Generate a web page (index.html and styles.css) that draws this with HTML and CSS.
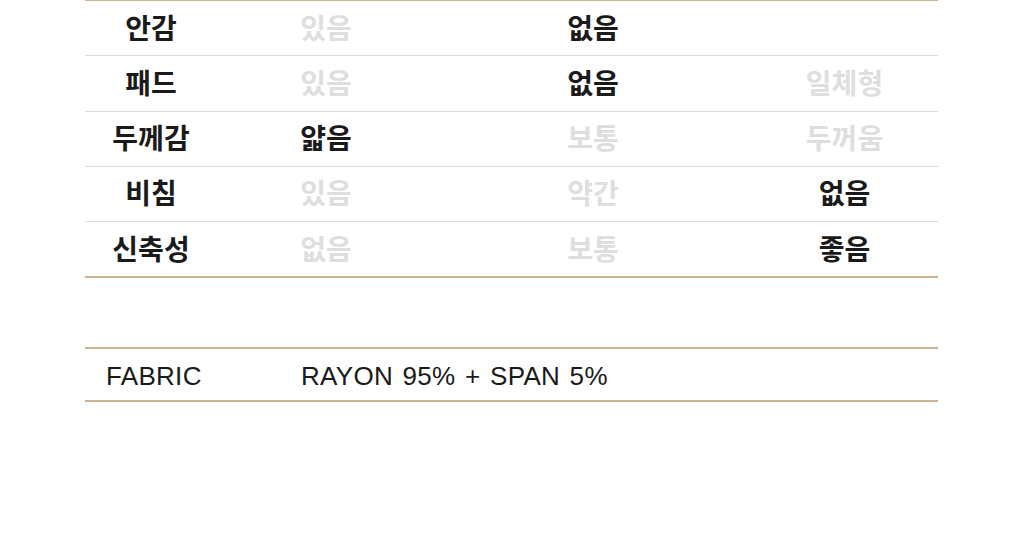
FILE: index.html
```html
<!DOCTYPE html>
<html lang="ko">
<head>
<meta charset="utf-8">
<link rel="stylesheet" href="styles.css">
</head>
<body>
<div class="page">
  <div class="spec">
    <div class="row">
      <div class="label">안감</div>
      <div class="val off">있음</div>
      <div class="val on">없음</div>
      <div class="val"></div>
    </div>
    <div class="row">
      <div class="label">패드</div>
      <div class="val off">있음</div>
      <div class="val on">없음</div>
      <div class="val off">일체형</div>
    </div>
    <div class="row">
      <div class="label">두께감</div>
      <div class="val on">얇음</div>
      <div class="val off">보통</div>
      <div class="val off">두꺼움</div>
    </div>
    <div class="row">
      <div class="label">비침</div>
      <div class="val off">있음</div>
      <div class="val off">약간</div>
      <div class="val on">없음</div>
    </div>
    <div class="row">
      <div class="label">신축성</div>
      <div class="val off">없음</div>
      <div class="val off">보통</div>
      <div class="val on">좋음</div>
    </div>
  </div>
  <div class="fabric">
    <div class="f-label">FABRIC</div>
    <div class="f-val">RAYON 95% + SPAN 5%</div>
  </div>
</div>
</body>
</html>
```
FILE: styles.css
```css
html, body {
  margin: 0;
  padding: 0;
  background: #ffffff;
}
.page {
  width: 853px;
  margin-left: 85px;
  font-family: "Noto Sans CJK KR", "Noto Sans", sans-serif;
}
.spec {
  margin-top: -1px;
  border-top: 2px solid #cdb394;
  border-bottom: 2px solid #cdb394;
}
.row {
  display: grid;
  grid-template-columns: 132px 218px 316px 187px;
  height: 51.25px;
  padding-bottom: 3px;
  align-items: center;
  border-bottom: 1px solid #dcdcdc;
}
.row:last-child {
  border-bottom: none;
}
.label, .val {
  text-align: center;
  font-size: 28px;
  font-weight: 700;
  line-height: 1;
}
.label {
  color: #1a1a1a;
}
.val.on {
  color: #1a1a1a;
}
.val.off {
  color: #dedede;
}
.fabric {
  margin-top: 69px;
  display: flex;
  align-items: center;
  height: 48px;
  padding-top: 3px;
  border-top: 2px solid #cdb394;
  border-bottom: 2px solid #cdb394;
  font-family: "Liberation Sans", Arial, sans-serif;
  font-size: 26px;
  color: #1a1a1a;
  letter-spacing: 0.3px;
  word-spacing: 2px;
}
.f-label {
  width: 195px;
  padding-left: 21px;
}
.f-val {
  flex: 1;
}
```
